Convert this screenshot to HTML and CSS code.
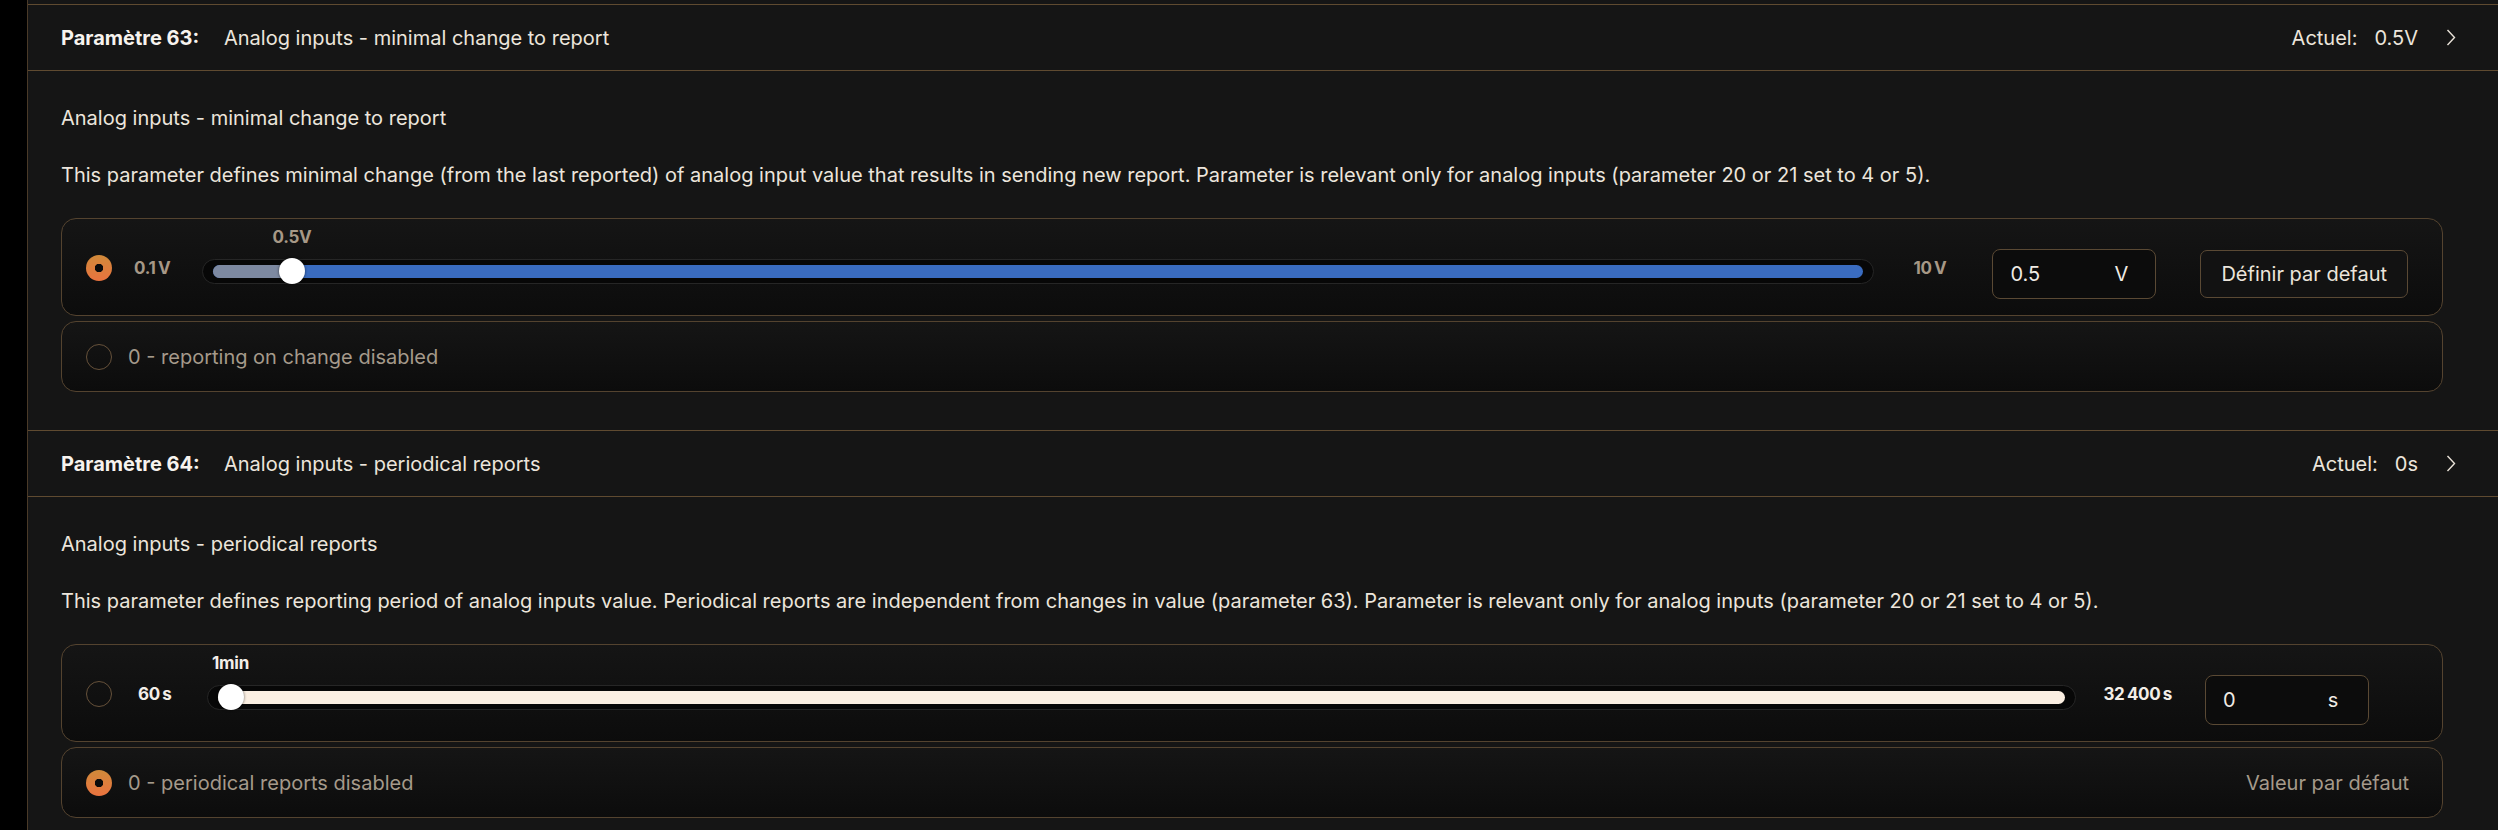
FILE: index.html
```html
<html>
<head>
    <title>Paramètres</title>
    <meta charset="utf-8">
    <link rel="stylesheet" href="styles.css">
</head>
<body>
<div id="panel">
    <!-- parameter 63 -->
    <div class="param">
        <div class="param-head">
            <span class="param-num">Paramètre 63:</span>
            <span class="param-name">Analog inputs - minimal change to report</span>
            <span class="actual-label">Actuel:</span>
            <span class="actual-value">0.5V</span>
            <svg class="chevron" width="10" height="17" viewBox="0 0 10 17"><polyline points="1.5,1 8.5,8.5 1.5,16" fill="none" stroke="#e9e2d8" stroke-width="1.4"/></svg>
        </div>
        <div class="param-body">
            <div class="param-title">Analog inputs - minimal change to report</div>
            <div class="param-desc">This parameter defines minimal change (from the last reported) of analog input value that results in sending new report. Parameter is relevant only for analog inputs (parameter 20 or 21 set to 4 or 5).</div>
            <div class="option slider-row">
                <span class="radio checked"></span>
                <span class="range-end range-min">0.1&#8201;V</span>
                <div class="range">
                    <div class="track" style="--pos: 0.0404">
                        <div class="fill"></div>
                        <div class="thumb"><span class="thumb-label">0.5V</span></div>
                    </div>
                </div>
                <span class="range-end range-max">10&#8201;V</span>
                <div class="num"><span class="num-value">0.5</span><span class="num-unit">V</span></div>
                <button class="btn">Définir par defaut</button>
            </div>
            <div class="option plain">
                <span class="radio"></span>
                <span class="option-text">0 - reporting on change disabled</span>
            </div>
        </div>
    </div>

    <!-- parameter 64 -->
    <div class="param">
        <div class="param-head">
            <span class="param-num">Paramètre 64:</span>
            <span class="param-name">Analog inputs - periodical reports</span>
            <span class="actual-label">Actuel:</span>
            <span class="actual-value">0s</span>
            <svg class="chevron" width="10" height="17" viewBox="0 0 10 17"><polyline points="1.5,1 8.5,8.5 1.5,16" fill="none" stroke="#e9e2d8" stroke-width="1.4"/></svg>
        </div>
        <div class="param-body">
            <div class="param-title">Analog inputs - periodical reports</div>
            <div class="param-desc">This parameter defines reporting period of analog inputs value. Periodical reports are independent from changes in value (parameter 63). Parameter is relevant only for analog inputs (parameter 20 or 21 set to 4 or 5).</div>
            <div class="option slider-row no-btn">
                <span class="radio"></span>
                <span class="range-end range-min light">60&#8201;s</span>
                <div class="range">
                    <div class="track idle" style="--pos: 0">
                        <div class="fill"></div>
                        <div class="thumb"><span class="thumb-label light">1min</span></div>
                    </div>
                </div>
                <span class="range-end range-max light">32&#8201;400&#8201;s</span>
                <div class="num"><span class="num-value">0</span><span class="num-unit">s</span></div>
            </div>
            <div class="option plain">
                <span class="radio checked"></span>
                <span class="option-text">0 - periodical reports disabled</span>
                <span class="option-default">Valeur par défaut</span>
            </div>
        </div>
    </div>
</div>
</body>
</html>
```

FILE: styles.css
```css
body {
    margin: 0;
    background: #000;
    font-family: Inter, "Noto Sans", sans-serif;
    color: #ece5dc;
    overflow: hidden;
}
#panel {
    margin-left: 27px;
    padding-top: 4px;
    min-height: 100vh;
    background: #151515;
    border-left: 1px solid #4a3a28;
}

/* parameter header */
.param {
    border-top: 1px solid #5f4a30;
}
.param-head {
    display: flex;
    align-items: center;
    height: 65px;
    padding: 0 42px 0 33px;
    border-bottom: 1px solid #5f4a30;
    font-size: 20px;
}
.param-num {
    font-weight: 700;
    color: #f7f3ee;
    width: 163px;
}
.param-name {
    flex: 1;
}
.actual-value {
    margin-left: 17px;
}
.chevron {
    margin-left: 28px;
}

/* parameter body */
.param-body {
    padding: 34px 55px 38px 33px;
}
.param-title {
    font-size: 20px;
    line-height: 26px;
}
.param-desc {
    font-size: 20px;
    line-height: 26px;
    margin: 31px 0 30px 0;
}
.option {
    display: flex;
    align-items: center;
    border: 1px solid #54432f;
    border-radius: 15px;
    background: linear-gradient(#151515, #0c0c0c);
    padding-left: 24px;
}
.option.plain {
    margin-top: 5px;
    height: 71px;
    box-sizing: border-box;
    padding-right: 33px;
}
.option-text {
    margin-left: 16px;
    font-size: 20px;
    color: #a59a8b;
    flex: 1;
}
.option-default {
    font-size: 20px;
    color: #a59a8b;
}

/* radio */
.radio {
    width: 26px;
    height: 26px;
    box-sizing: border-box;
    border-radius: 50%;
    border: 1.5px solid #66513a;
    flex: none;
}
.radio.checked {
    border: none;
    background: radial-gradient(circle, #0b0b0b 4px, transparent 4.5px), linear-gradient(#d08a3a, #ea733f);
}

/* slider row */
.slider-row {
    padding: 30px 34px 16px 24px;
}
.slider-row.no-btn {
    padding-right: 73px;
}
.slider-row .radio {
    margin-bottom: 12px;
}
.range-end {
    font-size: 17px;
    font-weight: 700;
    letter-spacing: -0.3px;
    color: #a69886;
    margin-bottom: 12px;
    white-space: nowrap;
}
.range-min {
    margin-left: 22px;
}
.no-btn .range-min {
    margin-left: 26px;
}
.range-end.light {
    color: #f3eee8;
}
.range {
    flex: 1;
    height: 25px;
    box-sizing: border-box;
    margin: 0 39px 6px 32px;
    padding: 0 10px;
    display: flex;
    align-items: center;
    background: #070707;
    border: 1px solid #262626;
    border-radius: 13px;
}
.no-btn .range {
    margin: 0 27px 6px 35px;
}
.track {
    position: relative;
    flex: 1;
    height: 13px;
    border-radius: 7px;
    background: #3a6cc0;
}
.track.idle {
    background: #fbefe2;
}
.fill {
    height: 100%;
    width: calc(13px + (100% - 26px) * var(--pos));
    border-radius: 7px 0 0 7px;
    background: #7d89a1;
}
.track.idle .fill {
    background: #9a9288;
}
.thumb {
    position: absolute;
    top: -6.5px;
    left: calc((100% - 26px) * var(--pos));
    width: 26px;
    height: 26px;
    border-radius: 50%;
    background: #fff;
    box-shadow: 0 0 3px rgba(0, 0, 0, 0.6);
}
.thumb-label {
    position: absolute;
    left: 50%;
    bottom: 100%;
    margin-bottom: 11px;
    transform: translateX(-50%);
    font-size: 17px;
    font-weight: 700;
    letter-spacing: -0.3px;
    color: #a69886;
    white-space: nowrap;
}
.thumb-label.light {
    color: #f3eee8;
}

/* number field */
.num {
    display: flex;
    align-items: center;
    width: 164px;
    height: 50px;
    box-sizing: border-box;
    margin-left: 46px;
    padding-left: 17px;
    border: 1px solid #5a4934;
    border-radius: 8px;
    background: #0c0c0c;
    font-size: 20px;
    color: #f0ebe4;
}
.no-btn .num {
    margin-left: 33px;
}
.num-value {
    width: 104px;
}
.num-unit {
    width: 12px;
    text-align: center;
}
.btn {
    margin-left: 44px;
    height: 48px;
    padding: 0 20px;
    border: 1px solid #5a4934;
    border-radius: 7px;
    background: #121212;
    color: #ece5dc;
    font-family: Inter, "Noto Sans", sans-serif;
    font-size: 20px;
}
```
